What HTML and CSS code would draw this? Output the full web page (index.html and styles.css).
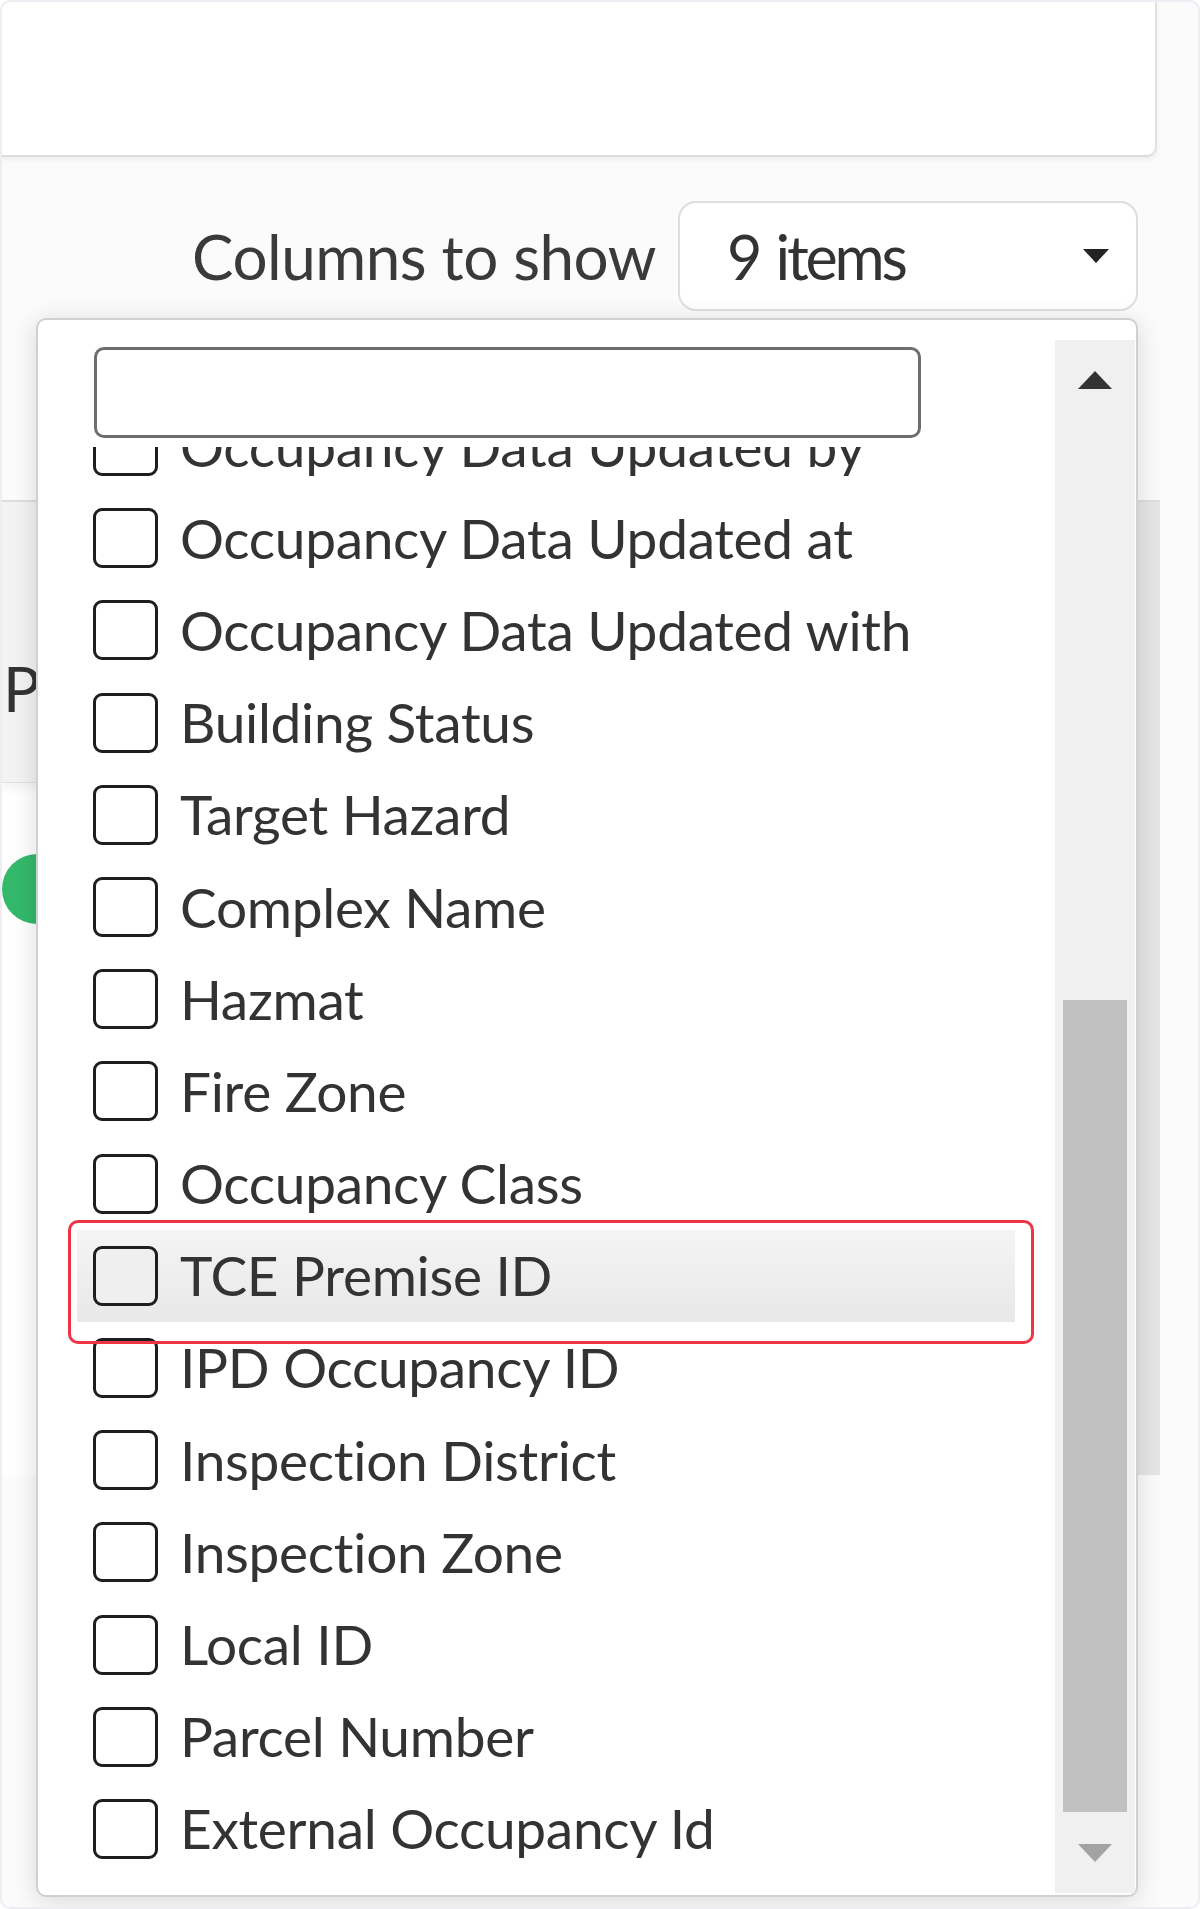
FILE: index.html
```html
<!DOCTYPE html>
<html lang="en">
<head>
<meta charset="utf-8">
<title>Columns to show</title>
<link rel="stylesheet" href="styles.css">
</head>
<body>
<div class="frame">
  <div class="card"></div>

  <div class="toolbar">
    <span class="toolbar-label">Columns to show</span>
    <div class="select">
      <span class="select-value">9 items</span>
      <svg class="caret" width="28" height="16" viewBox="0 0 28 16"><path d="M1 1 L27 1 L14 15 Z" fill="#222"/></svg>
    </div>
  </div>

  <div class="table">
    <div class="table-main">
      <div class="table-head"><span class="head-text">P</span></div>
      <div class="table-row"><span class="status-dot"></span></div>
    </div>
    <div class="table-side"></div>
  </div>

  <div class="dropdown">
    <div class="dropdown-body">
      <div class="search"></div>
      <div class="viewport">
        <ul class="options">
          <li class="option"><span class="box"></span><span class="label">Occupancy Data Updated by</span></li>
          <li class="option"><span class="box"></span><span class="label">Occupancy Data Updated at</span></li>
          <li class="option"><span class="box"></span><span class="label">Occupancy Data Updated with</span></li>
          <li class="option"><span class="box"></span><span class="label">Building Status</span></li>
          <li class="option"><span class="box"></span><span class="label">Target Hazard</span></li>
          <li class="option"><span class="box"></span><span class="label">Complex Name</span></li>
          <li class="option"><span class="box"></span><span class="label">Hazmat</span></li>
          <li class="option"><span class="box"></span><span class="label">Fire Zone</span></li>
          <li class="option"><span class="box"></span><span class="label">Occupancy Class</span></li>
          <li class="option is-hover"><span class="box"></span><span class="label">TCE Premise ID</span></li>
          <li class="option"><span class="box"></span><span class="label">IPD Occupancy ID</span></li>
          <li class="option"><span class="box"></span><span class="label">Inspection District</span></li>
          <li class="option"><span class="box"></span><span class="label">Inspection Zone</span></li>
          <li class="option"><span class="box"></span><span class="label">Local ID</span></li>
          <li class="option"><span class="box"></span><span class="label">Parcel Number</span></li>
          <li class="option"><span class="box"></span><span class="label">External Occupancy Id</span></li>
        </ul>
      </div>
    </div>
    <div class="scrollbar">
      <div class="sb-btn"><svg width="36" height="20" viewBox="0 0 36 20"><path d="M18 1 L35 19 L1 19 Z" fill="#333"/></svg></div>
      <div class="sb-gap"></div>
      <div class="sb-thumb"></div>
      <div class="sb-btn sb-btn-down"><svg width="36" height="20" viewBox="0 0 36 20"><path d="M1 1 L35 1 L18 19 Z" fill="#a3a3a3"/></svg></div>
    </div>
  </div>

  <div class="annotation"></div>
</div>
</body>
</html>
```

FILE: styles.css
```css
* { box-sizing: border-box; }

html, body {
  margin: 0;
  padding: 0;
  background: #ffffff;
}

body {
  font-family: Lato, "Open Sans", Arial, sans-serif;
  color: #333;
}

.frame {
  position: relative;
  width: 1200px;
  height: 1909px;
  border: 2px solid #eceef3;
  border-radius: 10px;
  background: #fbfbfb;
  overflow: hidden;
}

.card {
  width: 1157px;
  height: 155px;
  margin-left: -2px;
  background: #fff;
  border-right: 2px solid #e2e2e2;
  border-bottom: 2px solid #dcdcdc;
  border-bottom-right-radius: 10px;
  box-shadow: 0 3px 5px rgba(0, 0, 0, 0.05);
}

.toolbar {
  display: flex;
  justify-content: flex-end;
  align-items: center;
  gap: 22px;
  margin-top: 44px;
  padding-right: 60px;
}

.toolbar-label {
  font-size: 62px;
  color: #3a3a3a;
  line-height: 1;
  letter-spacing: -0.5px;
}

.select {
  display: flex;
  align-items: center;
  justify-content: space-between;
  width: 460px;
  height: 110px;
  padding: 0 26px 0 47px;
  background: #fff;
  border: 2px solid #dedede;
  border-radius: 18px;
}

.select-value {
  font-size: 61px;
  color: #333;
  line-height: 1;
  letter-spacing: -3.2px;
  word-spacing: 4px;
}

.caret { display: block; }

.table {
  display: flex;
  width: 1158px;
  height: 975px;
  margin-top: 189px;
  border-top: 2px solid #dedede;
}

.table-main {
  flex: 1;
  background: #fff;
}

.table-head {
  height: 281px;
  background: #f3f3f3;
  border-bottom: 1px solid #e0e0e0;
  box-shadow: 0 6px 8px rgba(0, 0, 0, 0.05);
  display: flex;
  align-items: center;
  padding: 92px 0 0 1px;
}

.head-text {
  font-size: 62px;
  color: #333;
  line-height: 1;
}

.table-row {
  padding-top: 71px;
}

.status-dot {
  display: block;
  width: 70px;
  height: 70px;
  border-radius: 50%;
  background: #34b96c;
}

.table-side {
  width: 40px;
  background: #e6e6e6;
}

.dropdown {
  position: absolute;
  left: 34px;
  top: 316px;
  width: 1102px;
  height: 1579px;
  display: flex;
  background: #fff;
  border: 2px solid #d0d0d0;
  border-radius: 10px;
  box-shadow: 0 4px 26px rgba(0, 0, 0, 0.14);
}

.dropdown-body {
  flex: 1;
  display: flex;
  flex-direction: column;
  min-width: 0;
}

.search {
  width: 827px;
  height: 91px;
  margin: 27px 0 0 56px;
  border: 3px solid #6e6e6e;
  border-radius: 10px;
  background: #fff;
}

.viewport {
  flex: 1;
  width: 938px;
  margin: 9px 0 0 39px;
  overflow: hidden;
}

.options {
  list-style: none;
  margin: -47px 0 0 0;
  padding: 0;
}

.option {
  display: flex;
  align-items: center;
  gap: 22px;
  height: 92.2px;
  padding-left: 16px;
}

.option.is-hover {
  background: linear-gradient(#f4f4f4, #e8e8e8);
}

.box {
  flex: none;
  width: 65px;
  height: 60px;
  border: 3px solid #1e1e1e;
  border-radius: 9px;
  background: #fff;
}

.option.is-hover .box {
  background: #efefef;
}

.label {
  font-size: 55px;
  line-height: 1;
  color: #333;
  white-space: nowrap;
  letter-spacing: -0.3px;
}

.scrollbar {
  flex: none;
  width: 80px;
  margin: 20px 1px 2px 0;
  display: flex;
  flex-direction: column;
  background: #f0f0f0;
}

.sb-btn {
  height: 80px;
  display: flex;
  align-items: center;
  justify-content: center;
}

.sb-btn-down {
  height: 81px;
}

.sb-gap {
  height: 580px;
}

.sb-thumb {
  flex: 1;
  margin: 0 8px;
  background: #c1c1c1;
}

.annotation {
  position: absolute;
  left: 66px;
  top: 1218px;
  width: 966px;
  height: 124px;
  border: 3px solid #ee3445;
  border-radius: 10px;
  pointer-events: none;
}
```
